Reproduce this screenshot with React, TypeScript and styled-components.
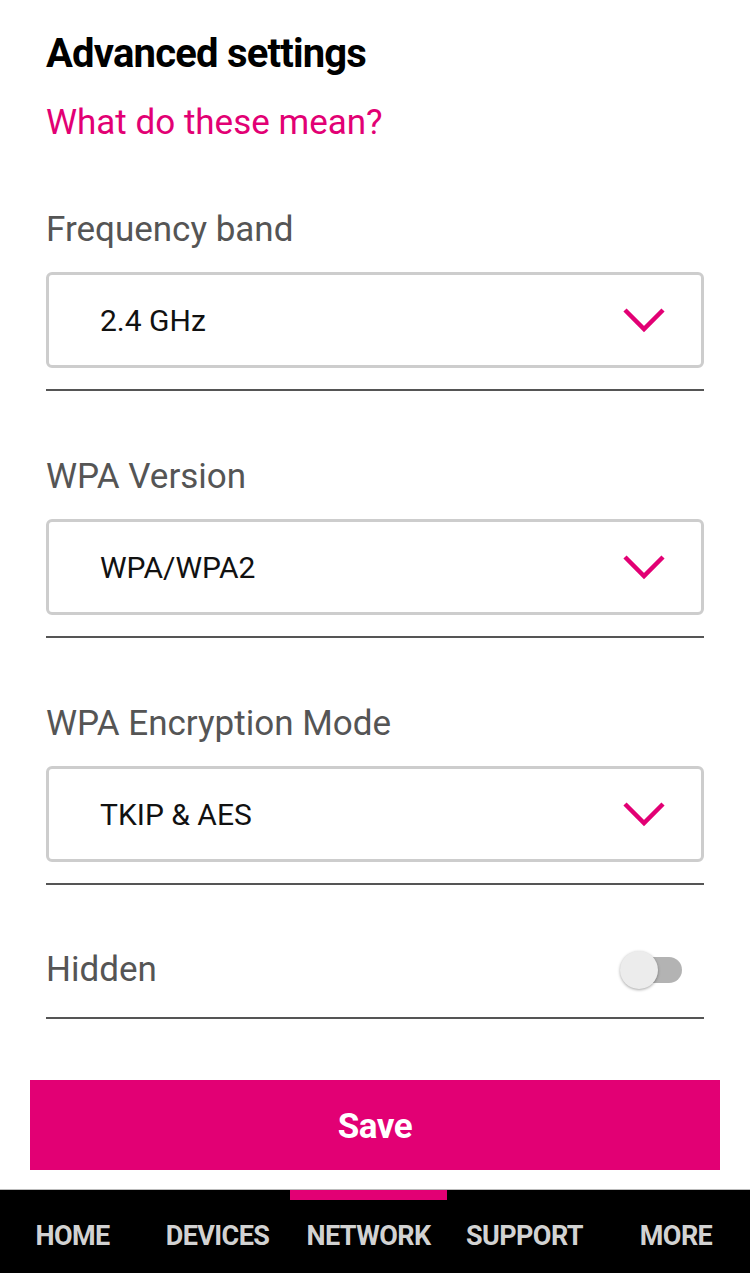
import React from 'react';
import styled, { createGlobalStyle } from 'styled-components';

const GlobalStyle = createGlobalStyle`
  html, body {
    margin: 0;
    padding: 0;
    background: #fff;
  }
  body {
    font-family: Roboto, "Liberation Sans", Arial, sans-serif;
  }
`;

const Page = styled.div`
  width: 750px;
  height: 1273px;
  display: flex;
  flex-direction: column;
  background: #fff;
  overflow: hidden;
`;

const Content = styled.div`
  padding: 30px 46px 0 46px;
  display: flex;
  flex-direction: column;
`;

const Title = styled.h1`
  margin: 0;
  font-size: 40px;
  font-weight: 700;
  letter-spacing: -0.8px;
  color: #000;
  line-height: 48px;
`;

const HelpLink = styled.a`
  margin-top: 25px;
  font-size: 35px;
  color: #e20074;
  line-height: 40px;
  text-decoration: none;
`;

const Field = styled.div`
  display: flex;
  flex-direction: column;
  border-bottom: 2px solid #555;
  padding-top: ${p => (p.$first ? 67 : 66)}px;
  padding-bottom: 21px;
`;

const Label = styled.div`
  font-size: 35px;
  color: #555;
  line-height: 40px;
  margin-bottom: 22px;
`;

const Select = styled.div`
  height: 90px;
  border: 3px solid #cdcdcd;
  border-radius: 6px;
  display: flex;
  align-items: center;
  justify-content: space-between;
  padding: 0 36px 0 51px;
`;

const Value = styled.span`
  font-size: 30px;
  color: #111;
`;

const ToggleRow = styled.div`
  display: flex;
  align-items: center;
  justify-content: space-between;
  border-bottom: 2px solid #555;
  padding: 65px 0 27px 0;
`;

const ToggleLabel = styled.span`
  font-size: 35px;
  line-height: 40px;
  color: #555;
`;

const Switch = styled.div`
  position: relative;
  width: 52px;
  height: 26px;
  margin-right: 22px;
  border-radius: 13px;
  background: #b3b3b3;
`;

const Knob = styled.span`
  position: absolute;
  left: -10px;
  top: -6px;
  width: 38px;
  height: 38px;
  border-radius: 50%;
  background: #ececec;
  box-shadow: 0 1px 3px rgba(0, 0, 0, 0.35);
`;

const SaveButton = styled.button`
  margin: 61px 30px 0 30px;
  height: 91px;
  padding-top: 4px;
  border: none;
  background: #e20074;
  color: #fff;
  font-family: Roboto, "Liberation Sans", Arial, sans-serif;
  font-size: 35px;
  font-weight: 700;
  letter-spacing: -0.5px;
`;

const Nav = styled.nav`
  margin-top: 19px;
  height: 84px;
  background: #000;
  border-top: 1px solid #bbb;
  display: grid;
  grid-template-columns: 145px 145px 157px 155px 148px;
`;

const NavItem = styled.div`
  position: relative;
  display: flex;
  align-items: center;
  justify-content: center;
  padding-top: 10px;
  font-size: 27px;
  font-weight: 700;
  letter-spacing: -0.6px;
  color: #d2d2d2;

  &::before {
    content: '';
    display: ${p => (p.$active ? 'block' : 'none')};
    position: absolute;
    top: 0;
    left: 0;
    right: 0;
    height: 10px;
    background: #e20074;
  }
`;

const Chevron = () => (
  <svg width="42" height="26" viewBox="0 0 42 26">
    <path d="M2 3 L21 22 L40 3" fill="none" stroke="#e20074" strokeWidth="4.5" />
  </svg>
);

const fields = [
  { label: 'Frequency band', value: '2.4 GHz' },
  { label: 'WPA Version', value: 'WPA/WPA2' },
  { label: 'WPA Encryption Mode', value: 'TKIP & AES' },
];

const tabs = ['HOME', 'DEVICES', 'NETWORK', 'SUPPORT', 'MORE'];

export default function App() {
  return (
    <Page>
      <GlobalStyle />
      <Content>
        <Title>Advanced settings</Title>
        <HelpLink>What do these mean?</HelpLink>
        {fields.map((f, i) => (
          <Field key={f.label} $first={i === 0}>
            <Label>{f.label}</Label>
            <Select>
              <Value>{f.value}</Value>
              <Chevron />
            </Select>
          </Field>
        ))}
        <ToggleRow>
          <ToggleLabel>Hidden</ToggleLabel>
          <Switch>
            <Knob />
          </Switch>
        </ToggleRow>
      </Content>
      <SaveButton>Save</SaveButton>
      <Nav>
        {tabs.map(t => (
          <NavItem key={t} $active={t === 'NETWORK'}>{t}</NavItem>
        ))}
      </Nav>
    </Page>
  );
}
